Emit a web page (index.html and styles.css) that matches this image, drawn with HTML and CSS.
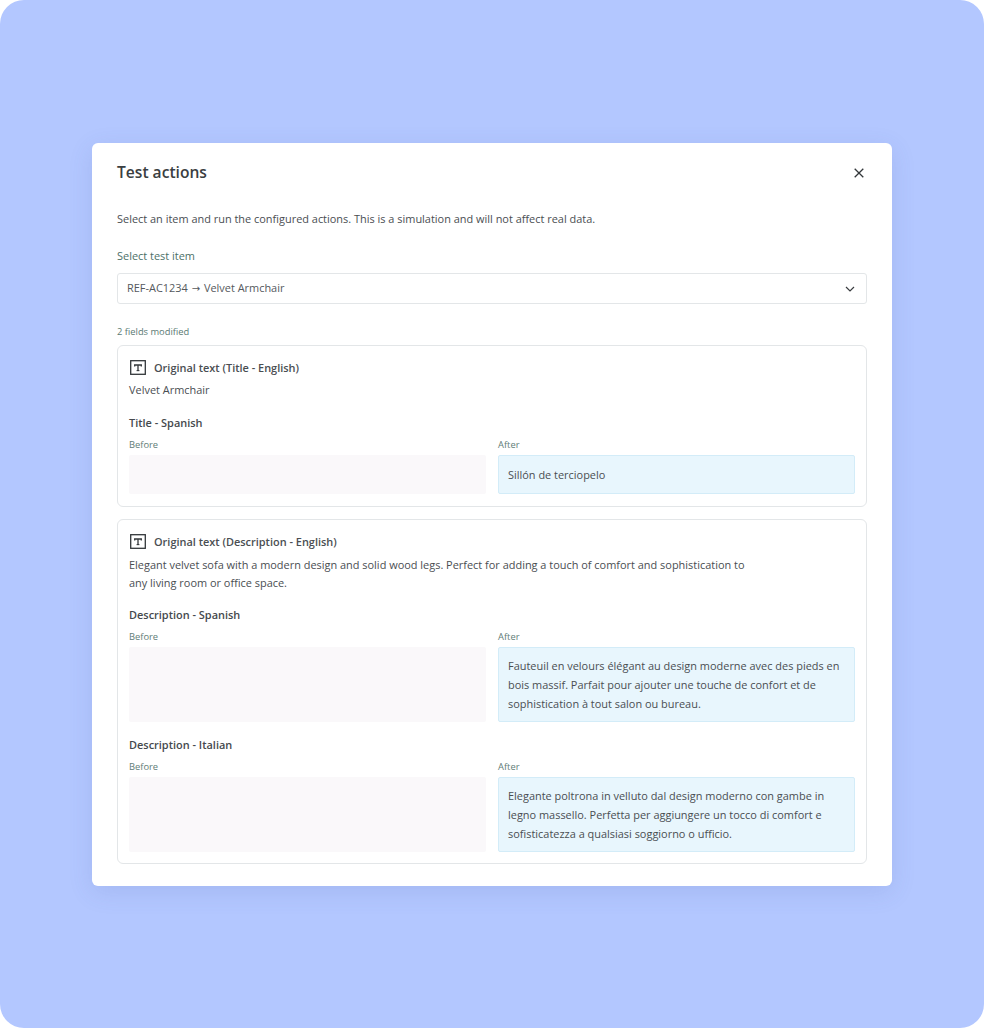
FILE: index.html
```html
<!DOCTYPE html>
<html lang="en">
<head>
<meta charset="utf-8">
<title>Test actions</title>
<link rel="stylesheet" href="styles.css">
</head>
<body>
<main class="frame">
  <section class="modal">
    <header class="modal-head">
      <h1>Test actions</h1>
      <svg class="close" viewBox="0 0 10 10" width="10" height="10"><path d="M.7.7l8.6 8.6M9.3.7L.7 9.3"/></svg>
    </header>
    <p class="intro">Select an item and run the configured actions. This is a simulation and will not affect real data.</p>
    <label class="select-label">Select test item</label>
    <div class="select">
      <span class="select-value">REF-AC1234 <span class="arrow">→</span> Velvet Armchair</span>
      <svg class="chev" viewBox="0 0 10 6" width="10" height="6"><path d="M1 1l4 4 4-4"/></svg>
    </div>
    <div class="count">2 fields modified</div>

    <article class="card card-title">
      <div class="orig-head">
        <svg class="t-icon" viewBox="0 0 16 15" width="16" height="15"><rect x=".7" y=".7" width="14.6" height="13.6"/><path class="t-bar" d="M4.7 6.6V5h6.6v1.6M8 5v5.6"/><path class="t-foot" d="M6.6 10.6h2.8"/></svg>
        <span>Original text (Title - English)</span>
      </div>
      <p class="orig-text one">Velvet Armchair</p>
      <h2 class="field">Title - Spanish</h2>
      <div class="compare">
        <div class="col"><div class="tag">Before</div><div class="box before short"></div></div>
        <div class="col"><div class="tag">After</div><div class="box after short">Sillón de terciopelo</div></div>
      </div>
    </article>

    <article class="card card-desc">
      <div class="orig-head">
        <svg class="t-icon" viewBox="0 0 16 15" width="16" height="15"><rect x=".7" y=".7" width="14.6" height="13.6"/><path class="t-bar" d="M4.7 6.6V5h6.6v1.6M8 5v5.6"/><path class="t-foot" d="M6.6 10.6h2.8"/></svg>
        <span>Original text (Description - English)</span>
      </div>
      <p class="orig-text two">Elegant velvet sofa with a modern design and solid wood legs. Perfect for adding a touch of comfort and sophistication to any living room or office space.</p>
      <h2 class="field">Description - Spanish</h2>
      <div class="compare">
        <div class="col"><div class="tag">Before</div><div class="box before tall"></div></div>
        <div class="col"><div class="tag">After</div><div class="box after tall">Fauteuil en velours élégant au design moderne avec des pieds en bois massif. Parfait pour ajouter une touche de confort et de sophistication à tout salon ou bureau.</div></div>
      </div>
      <h2 class="field">Description - Italian</h2>
      <div class="compare">
        <div class="col"><div class="tag">Before</div><div class="box before tall"></div></div>
        <div class="col"><div class="tag">After</div><div class="box after tall">Elegante poltrona in velluto dal design moderno con gambe in legno massello. Perfetta per aggiungere un tocco di comfort e sofisticatezza a qualsiasi soggiorno o ufficio.</div></div>
      </div>
    </article>
  </section>
</main>
</body>
</html>
```
FILE: styles.css
```css
* { box-sizing: border-box; }
html, body { margin: 0; background: #fff; }
body { font-family: "Open Sans", sans-serif; color: #3a3d40; }
.frame {
  width: 984px; height: 1028px;
  background: #b3c7ff;
  border-radius: 24px;
  padding: 143px 92px 0;
}
.modal {
  width: 800px; height: 743px;
  background: #fff;
  border-radius: 6px;
  padding: 0 25px;
  box-shadow: 0 6px 24px rgba(70, 90, 160, .14);
}
.modal-head {
  height: 58px;
  display: flex; align-items: center; justify-content: space-between;
  padding: 0 3px 0 0;
}
h1 { margin: 0; font-size: 15.6px; line-height: 22px; font-weight: 600; color: #3a3e41; }
.close { margin-top: 2px; fill: none; stroke: #33373a; stroke-width: 1.3; }
.intro { margin: 10px 0 0; font-size: 10.95px; line-height: 16px; color: #4a4e52; }
.select-label { display: block; margin-top: 21px; font-size: 10.95px; line-height: 16px; color: #4d7068; }
.select {
  margin-top: 9px; height: 31px;
  border: 1px solid #e3e6e8; border-radius: 3px;
  padding: 0 11px 0 9px;
  display: flex; align-items: center; justify-content: space-between;
  font-size: 10.95px; color: #55595d;
}
.select-value { padding-bottom: 2px; }
.arrow { margin: 0 1px; font-family: "DejaVu Sans", sans-serif; font-size: 10px; }
.chev { fill: none; stroke: #3a3d40; stroke-width: 1.2; }
.count { margin-top: 21px; font-size: 9.36px; line-height: 14px; color: #5b7a74; }
.card {
  border: 1px solid #e3e6e8; border-radius: 6px;
  padding: 0 11px;
  margin-top: 6px;
}
.card-title { height: 162px; }
.card-desc { height: 345px; margin-top: 12px; }
.orig-head {
  height: 16px; margin-top: 13px;
  display: flex; align-items: center; gap: 8px;
  font-size: 10.95px; font-weight: 600; color: #4a4e52;
}
.t-icon { margin-left: 1px; fill: none; stroke: #33373a; stroke-width: 1.3; }
.t-bar { stroke-width: 1.3; }
.t-foot { stroke-width: 1.1; }
.orig-text { margin: 0; font-size: 10.95px; color: #4a4e52; line-height: 18px; }
.orig-text.one { margin-top: 6px; }
.orig-text.two { margin-top: 7px; width: 625px; }
.field { margin: 15px 0 0; font-size: 10.95px; line-height: 16px; font-weight: 600; color: #45494d; }
.card-title .field { margin-top: 16px; }
.compare { display: grid; grid-template-columns: 1fr 1fr; gap: 12px; margin-top: 8px; }
.tag { font-size: 9.36px; line-height: 12px; color: #5f7d78; margin-bottom: 4px; }
.box { border-radius: 2px; font-size: 10.95px; }
.before { background: #faf8fa; }
.short { height: 39px; }
.tall { height: 75px; }
.after {
  background: #e8f6fd; border: 1px solid #d3ecf8;
  padding: 8px 9px;
  line-height: 19px;
  color: #4a4e52;
}
.after.short { display: flex; align-items: center; padding: 0 9px; }
```
